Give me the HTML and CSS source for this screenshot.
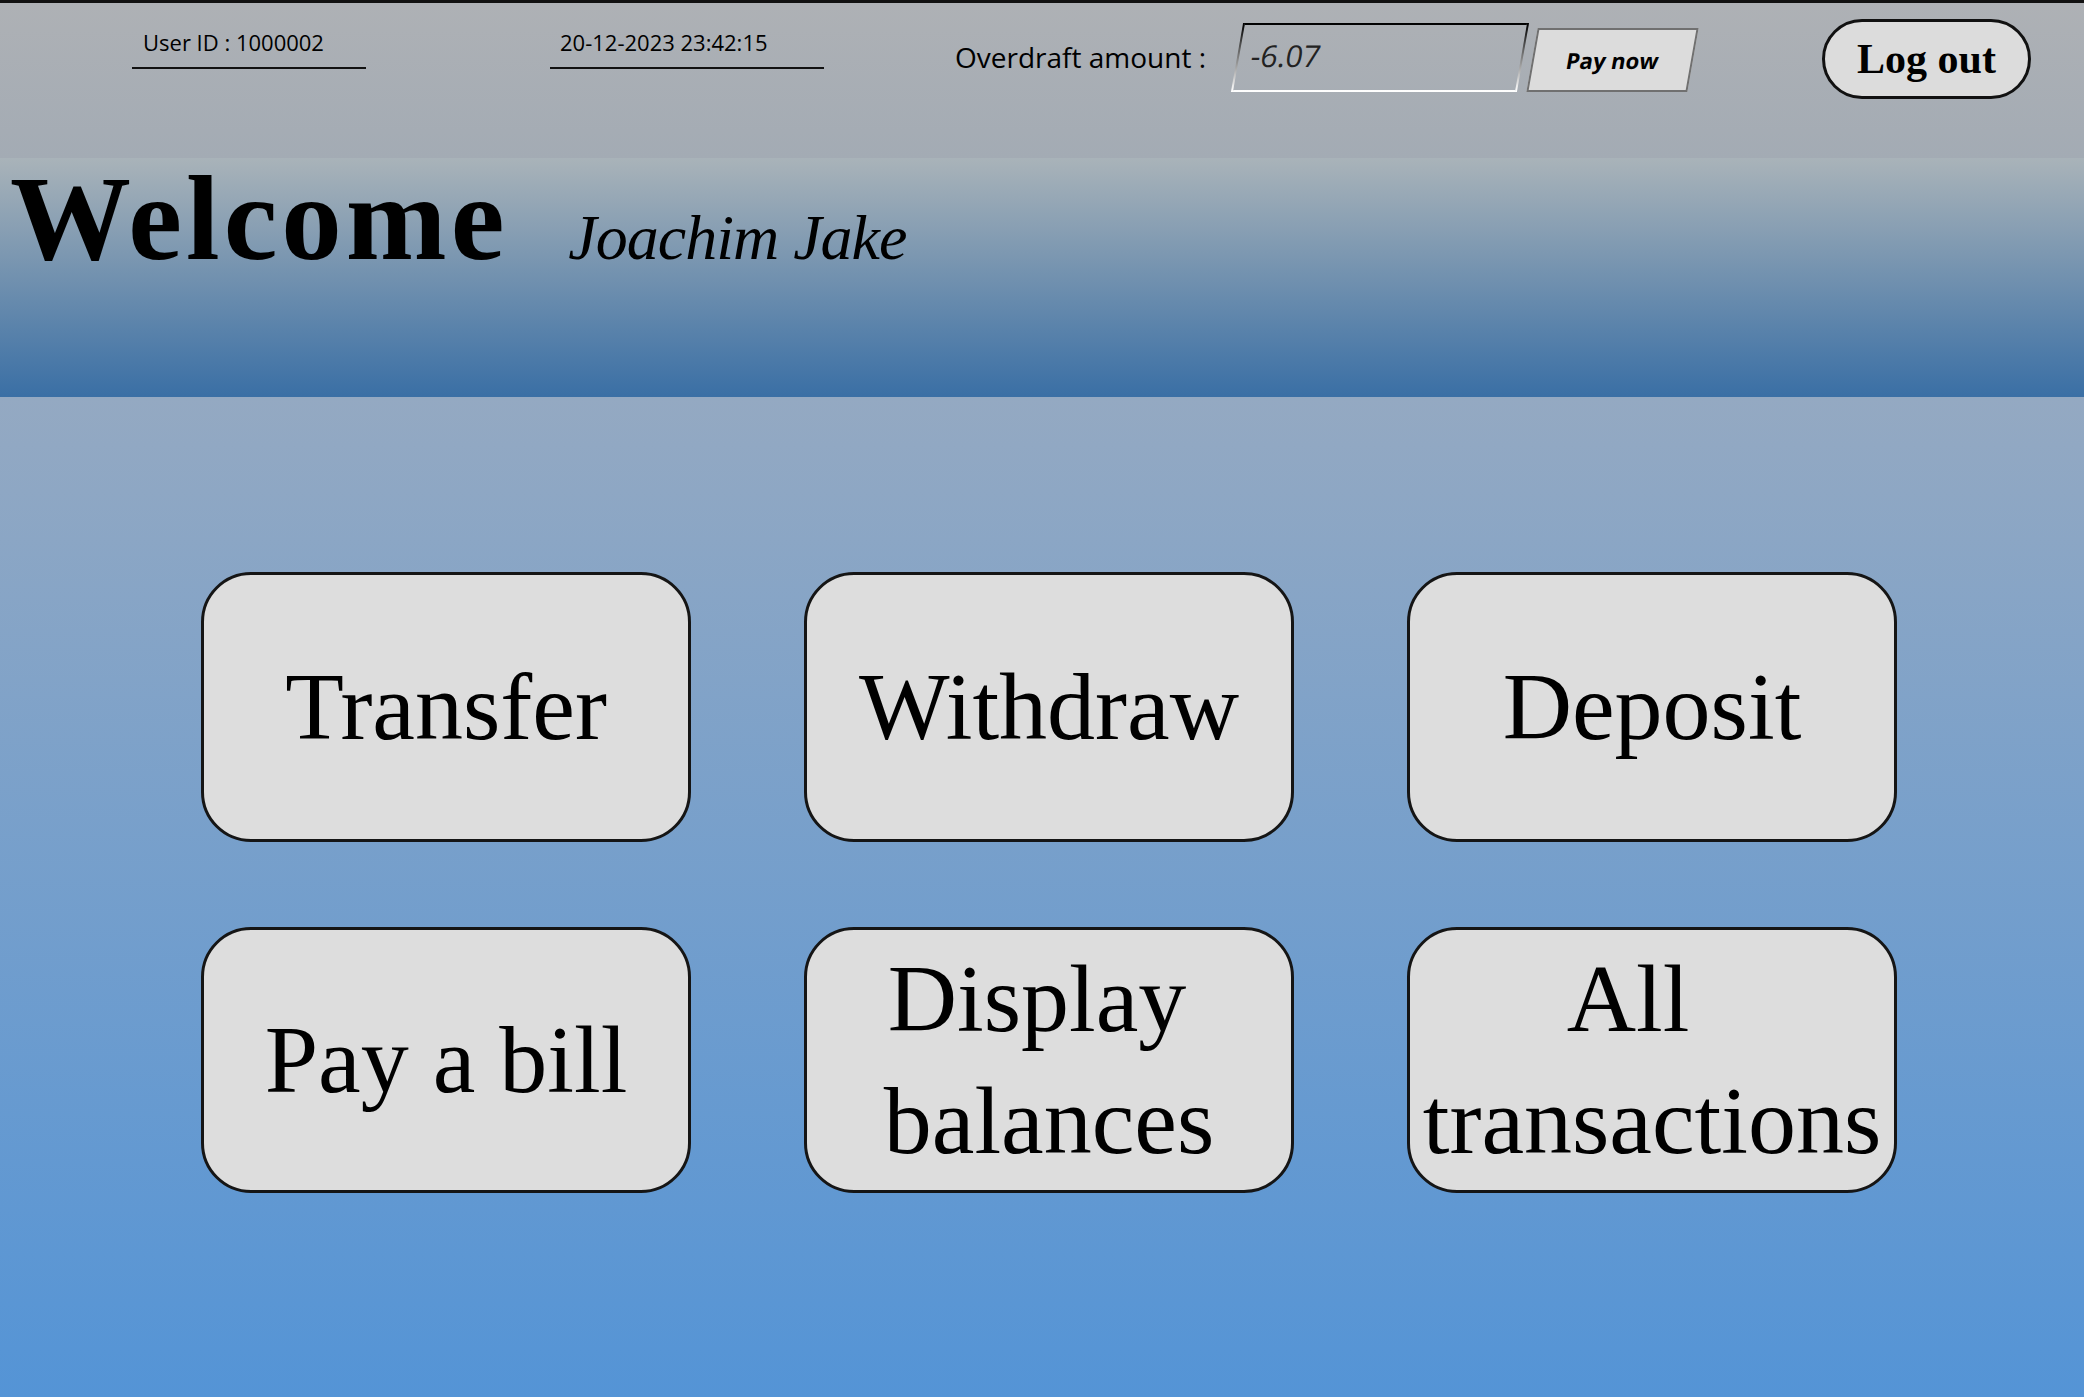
FILE: index.html
```html
<!DOCTYPE html>
<html lang="en">
<head>
  <meta charset="UTF-8" />
  <meta name="viewport" content="width=device-width, initial-scale=1.0"/>
  <title>ATM - Main menu</title>
  <link rel="stylesheet" href="styles.css">
</head>
<body>

  <header class="top-bar">
    <div class="info-field user-field">User ID : 1000002</div>
    <div class="info-field date-field">20-12-2023 23:42:15</div>
    <div class="overdraft-label">Overdraft amount :</div>
    <div class="overdraft-value">-6.07</div>
    <button class="pay-btn">Pay now</button>
    <button class="logout-btn">Log out</button>
  </header>

  <div class="banner">
    <h1 class="welcome">Welcome</h1>
    <span class="client-name">Joachim Jake</span>
  </div>

  <main class="menu">
    <div class="menu-grid">
      <button class="menu-btn">Transfer</button>
      <button class="menu-btn">Withdraw</button>
      <button class="menu-btn">Deposit</button>
      <button class="menu-btn">Pay a bill</button>
      <button class="menu-btn">Display&nbsp; balances</button>
      <button class="menu-btn">All&nbsp;&nbsp; transactions</button>
    </div>
  </main>

</body>
</html>
```

FILE: styles.css
```css
body {
  margin: 0;
  font-family: "Open Sans", "Liberation Sans", sans-serif;
  color: #000;
  overflow: hidden;
}

button {
  cursor: pointer;
  color: #000;
  padding: 0;
}

/* top bar */
.top-bar {
  height: 155px;
  border-top: 3px solid #111;
  background: linear-gradient(#aeb1b5, #a3abb4);
  display: flex;
  align-items: flex-start;
}

.info-field {
  font-size: 22px;
  line-height: 30px;
  margin-top: 24px;
  padding-bottom: 10px;
  border-bottom: 2px solid #111;
  box-sizing: border-box;
}

.user-field {
  margin-left: 132px;
  width: 234px;
  padding-left: 11px;
}

.date-field {
  margin-left: 184px;
  width: 274px;
  padding-left: 10px;
}

.overdraft-label {
  margin-left: 131px;
  margin-top: 35px;
  font-size: 28px;
  line-height: 38px;
}

.overdraft-value {
  margin-left: 31px;
  margin-top: 20px;
  width: 286px;
  height: 69px;
  box-sizing: border-box;
  padding: 6px 12px 0;
  border: 2px solid;
  border-image: linear-gradient(#000, #fff) 1;
  transform: skewX(-10deg);
  font-size: 30px;
  line-height: 50px;
  color: #222;
}

.pay-btn {
  margin-left: 9px;
  margin-top: 25px;
  width: 161px;
  height: 64px;
  background: #dcdcdc;
  border: 2px solid #707070;
  transform: skewX(-10deg);
  font-family: "Open Sans", sans-serif;
  font-size: 22px;
  font-weight: bold;
}

.logout-btn {
  margin-left: 129px;
  margin-top: 16px;
  width: 209px;
  height: 80px;
  background: #dcdcdc;
  border: 3px solid #111;
  border-radius: 40px;
  font-family: "Liberation Serif", serif;
  font-size: 42px;
  font-weight: bold;
}

/* banner */
.banner {
  height: 239px;
  background: linear-gradient(#a9b3b9, #3a6fa5);
  display: flex;
  align-items: baseline;
}

.welcome {
  margin: 0 0 0 10px;
  font-family: "Liberation Serif", serif;
  font-size: 121px;
  line-height: 120px;
  letter-spacing: 4px;
  font-weight: bold;
}

.client-name {
  margin-left: 60px;
  font-family: "Liberation Serif", serif;
  font-style: italic;
  font-size: 64px;
  letter-spacing: -1px;
}

/* menu */
.menu {
  height: 1000px;
  background: linear-gradient(#94a9c2, #5494d6);
  padding-top: 175px;
  box-sizing: border-box;
}

.menu-grid {
  display: grid;
  grid-template-columns: repeat(3, 490px);
  grid-template-rows: 270px 266px;
  column-gap: 113px;
  row-gap: 85px;
  padding-left: 201px;
}

.menu-btn {
  background: #dddddd;
  border: 3px solid #151515;
  border-radius: 50px;
  font-family: "Liberation Serif", serif;
  font-size: 96px;
  line-height: 122px;
  text-align: center;
}
```
